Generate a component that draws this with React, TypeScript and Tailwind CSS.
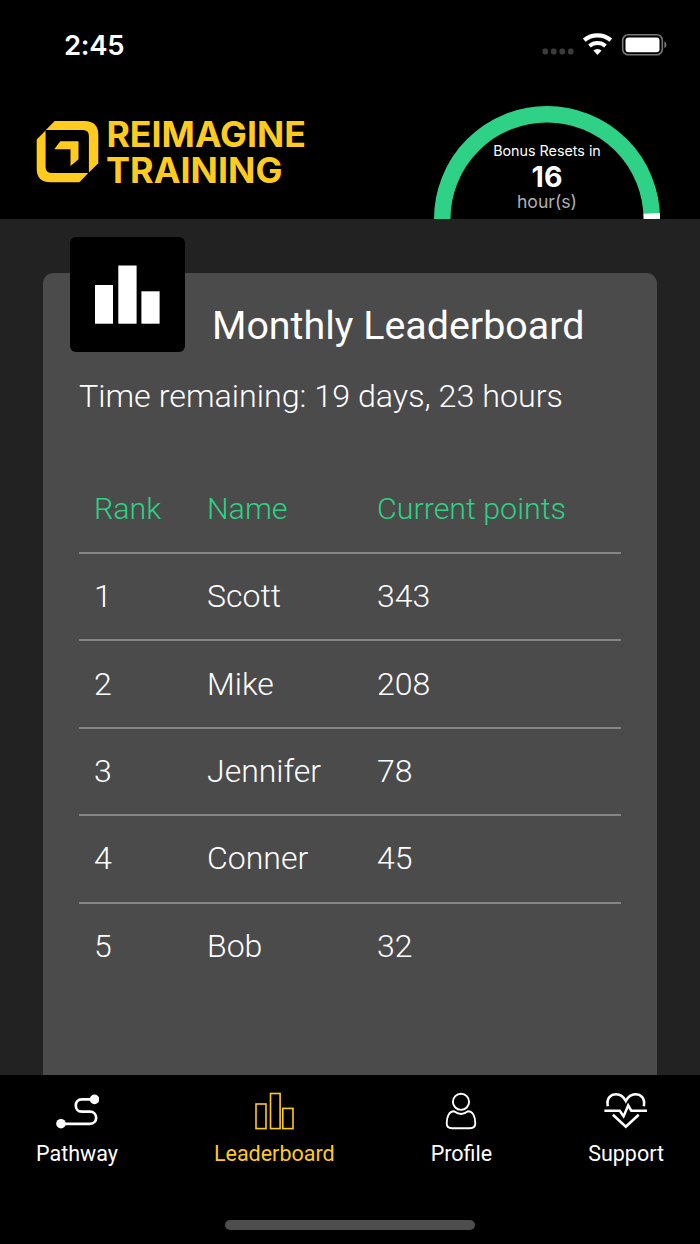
import React from "react";

const GREEN = "#2ed185";

const ENTRIES = [
  { rank: 1, name: "Scott", points: 343 },
  { rank: 2, name: "Mike", points: 208 },
  { rank: 3, name: "Jennifer", points: 78 },
  { rank: 4, name: "Conner", points: 45 },
  { rank: 5, name: "Bob", points: 32 },
];

function StatusBar() {
  return (
    <div className="flex h-[90px] items-center justify-between pl-16 pr-[33px]">
      <span className="pt-px font-['Inter',sans-serif] text-[27.5px] font-semibold leading-none tracking-[-0.3px]">2:45</span>
      <svg width="125" height="24" viewBox="0 0 125 24" fill="none">
        <g fill="#3b3b3b">
          <rect x="0.5" y="15.5" width="5.5" height="6" rx="2" />
          <rect x="9" y="15.5" width="5.5" height="6" rx="2" />
          <rect x="17.5" y="15.5" width="5.5" height="6" rx="2" />
          <rect x="26" y="15.5" width="5.5" height="6" rx="2" />
        </g>
        <path d="M42.2 7.2a20.5 20.5 0 0 1 26.6 0" stroke="#fff" strokeWidth="4.2" />
        <path d="M47.5 12.9a12.3 12.3 0 0 1 16 0" stroke="#fff" strokeWidth="4" />
        <path d="M51.4 17.6a6 6 0 0 1 8.2 0L55.5 22z" fill="#fff" />
        <rect x="80.7" y="1.7" width="39.6" height="20" rx="5.5" stroke="#777" strokeWidth="1.6" />
        <rect x="83.5" y="4.4" width="34" height="14.8" rx="3" fill="#fff" />
        <path d="M122.4 8.5v6.5c2.7-1 2.7-5.5 0-6.5z" fill="#777" />
      </svg>
    </div>
  );
}

function Logo() {
  return (
    <svg
      width="272"
      height="66"
      viewBox="0 0 272 66"
      fill="#ffcb1f"
      className="overflow-visible font-['Inter',sans-serif] text-[35px] font-bold"
    >
      <path d="M18.8 2H48.5Q62.3 2 62.3 16V44.3L52.9 53.6V17Q52.9 11 47 11H9.8Z" />
      <path d="M9.6 11.6V48Q9.6 54 16 54H52.3L43.4 63.3H15Q.7 63.3.7 50V20.5Z" />
      <path d="M24.3 22.3H42.5V40.2L34.5 47V30.2H18.2Z" />
      <text x="70.4" y="27.8" textLength="199.5" lengthAdjust="spacingAndGlyphs">REIMAGINE</text>
      <text x="70" y="63.6" textLength="176.5" lengthAdjust="spacingAndGlyphs">TRAINING</text>
    </svg>
  );
}

function BonusGauge() {
  return (
    <div className="relative h-[113px] w-[226px]">
      <svg width="226" height="113" viewBox="0 0 226 113" fill="none" strokeWidth="16.5">
        <path d="M8.25 113A104.75 104.75 0 0 1 217.75 113" stroke={GREEN} />
        <path d="M217.9 107.4L218.1 113" stroke="#fff" />
      </svg>
      <div className="absolute inset-x-0 top-[35px] flex flex-col items-center font-['Inter',sans-serif]">
        <span className="text-[14.3px] leading-[20px]">Bonus Resets in</span>
        <span className="text-[28.5px] font-bold leading-[31px]">16</span>
        <span className="text-[17.6px] leading-[20px] text-[#b0b0b0]">hour(s)</span>
      </div>
    </div>
  );
}

function LeaderboardCard() {
  return (
    <section className="mx-[43px] mt-[54px] h-[900px] rounded-t-[10px] bg-[#4b4b4b] px-9">
      <div className="flex h-[90px]">
        <div className="-ml-[9px] -mt-9 h-[115px] w-[115px] shrink-0 rounded-md bg-black">
          <svg width="115" height="115" viewBox="0 0 115 115" fill="#fff">
            <rect x="25" y="48" width="18" height="38.7" />
            <rect x="48.3" y="28.5" width="18.3" height="58.2" />
            <rect x="71.4" y="54.3" width="18.2" height="32.4" />
          </svg>
        </div>
        <h1 className="ml-[27px] whitespace-nowrap pt-[29px] text-[39.4px] leading-[48px]">Monthly Leaderboard</h1>
      </div>
      <p className="pt-[13px] text-[32.25px] font-light leading-[40px]">Time remaining: 19 days, 23 hours</p>
      <table className="mt-[50px] w-[542px] table-fixed text-left text-[32px] leading-[40px]">
        <thead>
          <tr className="h-[87px] text-[30.4px] text-[#2ed185]">
            <th className="w-[114px] pb-px pl-[15px] font-light">Rank</th>
            <th className="w-[169px] pb-px pl-[14px] font-light">Name</th>
            <th className="pb-px pl-[15px] font-light">Current points</th>
          </tr>
        </thead>
        <tbody>
          {ENTRIES.map((entry) => (
            <tr key={entry.rank} className="h-[87.4px] border-t-2 border-[#858585]">
              <td className="pb-px pl-[15px] font-light">{entry.rank}</td>
              <td className="pb-px pl-[14px] font-light">{entry.name}</td>
              <td className="pb-px pl-[15px] font-light">{entry.points}</td>
            </tr>
          ))}
        </tbody>
      </table>
      {/* next entry, scrolled under the tab bar */}
      <p className="ml-[127px] mt-[77px] text-[32px] font-light leading-[40px]">Abby</p>
    </section>
  );
}

function PathwayIcon() {
  return (
    <svg width="44" height="38" viewBox="-0.8 0 44 38" fill="none" stroke="#fff" strokeWidth="2.7">
      <path d="M5 31.8H34C42.5 31.8 42.5 19.7 34 19.7H26C18 19.7 18 7.3 26 7.3H39" />
      <circle cx="5.2" cy="31.7" r="4.8" fill="#fff" stroke="none" />
      <circle cx="38.7" cy="7.4" r="4.8" fill="#fff" stroke="none" />
    </svg>
  );
}

function BarsIcon() {
  return (
    <svg width="40" height="38" viewBox="0 0 40 38" fill="none" stroke="#ffcb1f" strokeWidth="1.6">
      <rect x="2" y="12" width="10" height="24.6" />
      <rect x="16.5" y="1.5" width="9.6" height="35.1" />
      <rect x="28.8" y="16.4" width="10.2" height="20.2" />
    </svg>
  );
}

function ProfileIcon() {
  return (
    <svg width="32" height="38" viewBox="0 0 32 38" fill="none" stroke="#fff" strokeWidth="1.9">
      <circle cx="16" cy="9.8" r="8.1" />
      <path d="M9 19.2Q16 24.6 23 19.2C28 19.2 30.3 25 30.3 31.3Q30.3 36.2 25 36.2H7Q1.7 36.2 1.7 31.3C1.7 25 4 19.2 9 19.2Z" />
    </svg>
  );
}

function SupportIcon() {
  return (
    <svg width="44" height="38" viewBox="0.6 0 44 38" fill="none" stroke="#fff" strokeWidth="2.6">
      <path d="M4.4 14.2C2.8 6 7.5 2.3 12.8 2.3C17.5 2.3 20.5 5.5 22.4 9C24.3 5.5 27.5 2.3 32 2.3C37.3 2.3 42 6 40.4 14.2" />
      <path d="M1 18.7H16.3L20.2 24.2L24.8 13.4L27.8 18.7H43.6" strokeWidth="2.5" />
      <path d="M9.5 22.8L22.4 34.8L35.3 22.8" />
    </svg>
  );
}

function Tab({ label, active, children }: { label: string; active?: boolean; children: React.ReactNode }) {
  return (
    <button className={active ? "flex flex-col items-center text-[#ffcb1f]" : "flex flex-col items-center text-white"}>
      {children}
      <span className="mt-[10px] text-[21.5px] leading-[28px]">{label}</span>
    </button>
  );
}

export default function App() {
  return (
    <div className="flex h-[1244px] w-[700px] flex-col overflow-hidden bg-[#222222] font-['Roboto',sans-serif] text-white">
      <header className="h-[219px] shrink-0 bg-black">
        <StatusBar />
        <div className="flex justify-between pl-9 pr-10 pt-4">
          <div className="pt-[13px]">
            <Logo />
          </div>
          <BonusGauge />
        </div>
      </header>

      <main className="h-[856px] shrink-0 overflow-hidden">
        <LeaderboardCard />
      </main>

      <nav className="flex flex-1 flex-col bg-black">
        <div className="flex justify-between px-9 pt-[17px]">
          <Tab label="Pathway">
            <PathwayIcon />
          </Tab>
          <Tab label="Leaderboard" active>
            <BarsIcon />
          </Tab>
          <Tab label="Profile">
            <ProfileIcon />
          </Tab>
          <Tab label="Support">
            <SupportIcon />
          </Tab>
        </div>
        <div className="mx-auto mb-[14px] mt-auto h-[10px] w-[250px] rounded-full bg-[#4d4d4d]" />
      </nav>
    </div>
  );
}
